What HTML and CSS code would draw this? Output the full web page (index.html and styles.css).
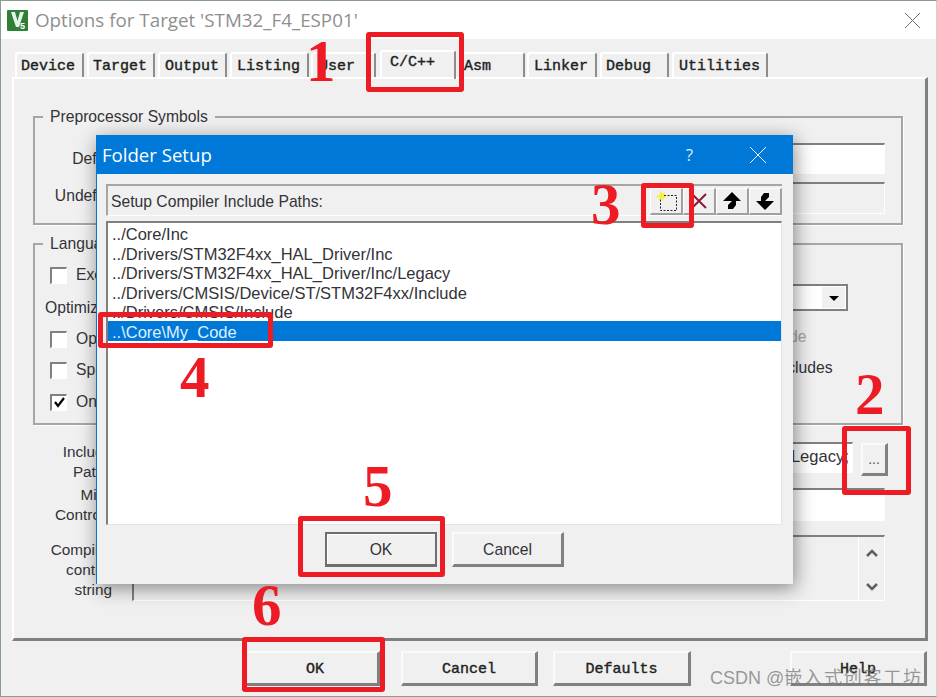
FILE: index.html
```html
<!DOCTYPE html>
<html lang="en">
<head>
    <meta charset="UTF-8">
    <meta name="viewport" content="width=device-width, initial-scale=1.0">
    <title>Options for Target</title>
    <link rel="stylesheet" href="styles.css">
</head>
<body>
    <div class="window">
        <div class="titlebar">
            <svg class="appIcon" width="21" height="21" viewBox="0 0 21 21">
                <rect width="21" height="21" rx="1" fill="#2f7f38"/>
                <path d="M4 2h4l2.500 9 2.500-9h4l-5 15h-3z" fill="#e8f2e8"/>
                <text x="13" y="19" font-family="Liberation Sans" font-size="9" font-weight="bold" fill="#fff">5</text>
            </svg>
            <span class="titleText">Options for Target 'STM32_F4_ESP01'</span>
            <svg class="closeIcon" width="15" height="15" viewBox="0 0 15 15">
                <path d="M0 0L15 15M15 0L0 15" stroke="#707070" fill="none"/>
            </svg>
        </div>

        <div class="tabs">
            <div class="tab tabDevice">Device</div>
            <div class="tab tabTarget">Target</div>
            <div class="tab tabOutput">Output</div>
            <div class="tab tabListing">Listing</div>
            <div class="tab tabUser">User</div>
            <div class="tab tabActive">C/C++</div>
            <div class="tab tabAsm">Asm</div>
            <div class="tab tabLinker">Linker</div>
            <div class="tab tabDebug">Debug</div>
            <div class="tab tabUtilities">Utilities</div>
        </div>

        <div class="panel">
            <fieldset class="group">
                <legend>Preprocessor Symbols</legend>
                <div class="symbolRow">
                    <div class="symbolLabel">Define:</div>
                    <div class="field symbolDefine"></div>
                </div>
                <div class="symbolRow symbolRowLast">
                    <div class="symbolLabel symbolLabelUndefine">Undefine:</div>
                    <div class="field fieldOff symbolUndefine"></div>
                </div>
            </fieldset>

            <fieldset class="group langGroup">
                <legend>Language / Code Generation</legend>
                <div class="langLeft">
                    <div class="check"><span class="checkBox"></span>Execute-only Code</div>
                    <div class="optLabel">Optimization:</div>
                    <div class="check checkOpt"><span class="checkBox"></span>Optimize for Time</div>
                    <div class="check checkSplit"><span class="checkBox"></span>Split Load and Store Multiple</div>
                    <div class="check checkOne">
                        <span class="checkBox">
                            <svg width="13" height="13" viewBox="0 0 13 13"><path d="M2 6l3 4 6-8" stroke="#000" stroke-width="2.200" fill="none"/></svg>
                        </span>One ELF Section per Function
                    </div>
                </div>
                <div class="langRight">
                    <div class="select">
                        <span class="selectArrow"></span>
                    </div>
                    <div class="check checkThumb"><span class="checkBox"></span><span class="disabledText">Thumb Mode</span></div>
                    <div class="check checkAuto"><span class="checkBox"></span>No Auto Includes</div>
                </div>
            </fieldset>

            <div class="formRow includeRow">
                <div class="formLabel">Include<br>Paths</div>
                <div class="field includeField">../Core/Inc;../Drivers/STM32F4xx_HAL_Driver/Inc;../Drivers/STM32F4xx_HAL_Driver/Inc/Legacy;</div>
                <div class="btn browseBtn">...</div>
            </div>
            <div class="formRow miscRow">
                <div class="formLabel">Misc<br>Controls</div>
                <div class="field miscField"></div>
            </div>
            <div class="formRow compilerRow">
                <div class="formLabel compilerLabel">Compiler<br>control<br>string</div>
                <div class="field fieldOff compilerField">
                    <div class="scrollCol">
                        <svg width="14" height="9" viewBox="0 0 14 9"><path d="M2 7l5-5 5 5" stroke="#606060" stroke-width="2.500" fill="none"/></svg>
                        <svg width="14" height="9" viewBox="0 0 14 9"><path d="M2 2l5 5 5-5" stroke="#606060" stroke-width="2.500" fill="none"/></svg>
                    </div>
                </div>
            </div>
        </div>

        <div class="footer">
            <div class="btn footBtn footOk">OK</div>
            <div class="btn footBtn footCancel">Cancel</div>
            <div class="btn footBtn footDefaults">Defaults</div>
            <div class="btn footBtn footHelp">Help</div>
        </div>
    </div>

    <div class="dialog">
        <div class="dialogTitle">
            <span class="dialogName">Folder Setup</span>
            <span class="dialogHelp">?</span>
            <svg class="dialogClose" width="16" height="16" viewBox="0 0 16 16">
                <path d="M0 0L16 16M16 0L0 16" stroke="#fff" fill="none"/>
            </svg>
        </div>
        <div class="pathHeader">
            <span class="pathCaption">Setup Compiler Include Paths:</span>
            <div class="toolBtn">
                <svg width="24" height="22" viewBox="0 0 24 22">
                    <rect x="6.500" y="5.500" width="16" height="15" fill="none" stroke="#222" stroke-dasharray="2 1.500"/>
                    <path d="M7 0l1.500 3.500L12 2 9.500 5.500 13 7.500 9.500 8 10 11 7.500 8.500 4 11l1.500-3.500L1 6.500l4.500-1.500z" fill="#f4f03c"/>
                </svg>
            </div>
            <div class="toolBtn">
                <svg width="16" height="16" viewBox="0 0 16 16"><path d="M1 1L15 15M15 1L1 15" stroke="#8d1c30" stroke-width="2" fill="none"/></svg>
            </div>
            <div class="toolBtn">
                <svg width="18" height="18" viewBox="0 0 18 18"><path d="M9 0L18 9H13V13L10 17H5V13L9 9H0z" fill="#000"/></svg>
            </div>
            <div class="toolBtn">
                <svg width="18" height="18" viewBox="0 0 18 18"><path d="M9 18L0 9H5V5L8 1H13V5L9 9H18z" fill="#000"/></svg>
            </div>
        </div>
        <div class="pathList">
            <div class="pathItem">../Core/Inc</div>
            <div class="pathItem">../Drivers/STM32F4xx_HAL_Driver/Inc</div>
            <div class="pathItem">../Drivers/STM32F4xx_HAL_Driver/Inc/Legacy</div>
            <div class="pathItem">../Drivers/CMSIS/Device/ST/STM32F4xx/Include</div>
            <div class="pathItem">../Drivers/CMSIS/Include</div>
            <div class="pathItem pathSelected">..\Core\My_Code</div>
        </div>
        <div class="dialogButtons">
            <div class="btn dialogBtn dialogOk">OK</div>
            <div class="btn dialogBtn">Cancel</div>
        </div>
    </div>

    <!-- red marks drawn on top of the screenshot -->
    <div class="redBox redBoxTab"></div>
    <div class="redBox redBoxBrowse"></div>
    <div class="redBox redBoxNew"></div>
    <div class="redBox redBoxPath"></div>
    <div class="redBox redBoxDialogOk"></div>
    <div class="redBox redBoxOk"></div>
    <div class="num num1">1</div>
    <div class="num num2">2</div>
    <div class="num num3">3</div>
    <div class="num num4">4</div>
    <div class="num num5">5</div>
    <div class="num num6">6</div>

    <div class="watermark">CSDN @<span class="watermarkCjk">嵌入式创客工坊</span></div>
</body>
</html>
```

FILE: styles.css
```css
body {
    font-family: "Liberation Sans", Arial, sans-serif;
    font-size: 15.700px;
    line-height: 20px;
    margin: 0;
    width: 937px;
    height: 697px;
    overflow: hidden;
    position: relative;
    background-color: #f0f0f0;
    color: #333338;
}

.window {
    box-sizing: border-box;
    width: 937px;
    height: 697px;
    border: 1px solid #8b9c8e;
    border-right-color: #d0d0d0;
    background-color: #f0f0f0;
}

.titlebar {
    display: flex;
    align-items: center;
    height: 38px;
    padding-left: 6px;
    background-color: #fff;
}

.appIcon {
    flex: none;
}

.titleText {
    margin-left: 7px;
    font-family: "Open Sans", sans-serif;
    font-size: 18.800px;
    color: #8f8f8f;
}

.closeIcon {
    margin-left: auto;
    margin-right: 16px;
}

.tabs {
    display: flex;
    align-items: flex-end;
    height: 38px;
    padding-left: 14px;
    font-family: "Liberation Mono", monospace;
    font-size: 15px;
    color: #222;
    -webkit-text-stroke: 0.400px #222;
}

.tab {
    box-sizing: border-box;
    height: 25px;
    padding: 3px 0 0 5px;
    margin-right: 3px;
    border-top: 2px solid #fff;
    border-left: 2px solid #fff;
    border-right: 2px solid #8c8c8c;
    border-radius: 3px 3px 0 0;
}

.tabDevice { width: 69px; padding-left: 4px; }
.tabTarget { width: 68px; padding-left: 4px; }
.tabOutput { width: 69px; }
.tabListing { width: 79px; margin-right: 2px; }
.tabUser { width: 65px; padding-left: 6px; margin-right: 4px; }
.tabActive { width: 76px; height: 29px; margin-bottom: -2px; padding: 1px 0 0 8px; position: relative; }
.tabAsm { width: 66px; padding-left: 3px; margin-right: 2px; }
.tabLinker { width: 70px; }
.tabDebug { width: 69px; padding-left: 4px; }
.tabUtilities { width: 96px; }

.panel {
    box-sizing: border-box;
    width: 916px;
    height: 564px;
    margin-left: 11px;
    padding: 29px 22px 0 19px;
    border-top: 2px solid #fff;
    border-left: 2px solid #fff;
    border-right: 3px solid #808080;
    border-bottom: 3px solid #808080;
}

.group {
    box-sizing: border-box;
    margin: 0;
    padding: 17px 16px 9px 15px;
    min-width: 0;
    border: 2px solid #a6a6a6;
    box-shadow: 1px 1px 0 #fff;
}

.group legend {
    margin-left: -7px;
    padding: 0 7px;
    line-height: 18px;
}

.symbolRow {
    display: flex;
    margin-bottom: 8px;
}

.symbolRowLast {
    margin-bottom: 0;
}

.symbolLabel {
    width: 72px;
    padding-top: 6px;
    text-align: right;
}

.symbolLabelUndefine {
    padding-top: 4px;
}

.field {
    box-sizing: border-box;
    border-top: 2px solid #808080;
    border-left: 2px solid #808080;
    border-right: 1px solid #fff;
    border-bottom: 1px solid #fff;
    background-color: #fff;
}

.fieldOff {
    background-color: #f0f0f0;
}

.symbolDefine,
.symbolUndefine {
    width: 753px;
    margin-left: 10px;
}

.symbolDefine { height: 31px; }
.symbolUndefine { height: 32px; }

.langGroup {
    display: flex;
    margin-top: 10px;
    padding: 12px 0 11px 15px;
}

.langLeft {
    width: 638px;
    flex: none;
}

.langRight {
    width: 160px;
}

.check {
    display: flex;
    align-items: center;
    height: 20px;
    white-space: nowrap;
}

.checkBox {
    box-sizing: border-box;
    display: flex;
    align-items: center;
    justify-content: center;
    width: 17px;
    height: 17px;
    margin-right: 9px;
    border-top: 2px solid #808080;
    border-left: 2px solid #808080;
    border-right: 1px solid #fff;
    border-bottom: 1px solid #fff;
    background-color: #fff;
}

.optLabel {
    height: 20px;
    margin-top: 13px;
    margin-left: -5px;
}

.checkOpt { margin-top: 11px; }
.checkSplit { margin-top: 11px; }
.checkOne { margin-top: 12px; }

.select {
    box-sizing: border-box;
    display: flex;
    justify-content: flex-end;
    height: 27px;
    margin-top: 19px;
    padding: 1px;
    border: 2px solid #808080;
    background-color: #fff;
}

.selectArrow {
    box-sizing: border-box;
    position: relative;
    width: 24px;
    background-color: #f0f0f0;
    border-left: 1px solid #fff;
}

.selectArrow::after {
    content: "";
    position: absolute;
    left: 7px;
    top: 9px;
    border-top: 5px solid #000;
    border-left: 5px solid transparent;
    border-right: 5px solid transparent;
}

.checkThumb { margin-top: 16px; }
.checkAuto { margin-top: 11px; }

.disabledText {
    color: #a5a5a5;
}

.formRow {
    display: flex;
    align-items: flex-start;
}

.formLabel {
    width: 79px;
    margin-right: 20px;
    font-size: 15.300px;
    text-align: right;
    flex: none;
}

.includeRow {
    height: 43px;
    margin-top: 17px;
}

.includeField {
    display: flex;
    justify-content: flex-end;
    width: 721px;
    height: 31px;
    padding-top: 3px;
    padding-right: 3px;
    font-size: 16.600px;
    overflow: hidden;
    white-space: nowrap;
}

.browseBtn {
    display: flex;
    justify-content: center;
    width: 27px;
    height: 33px;
    margin-left: 8px;
    margin-top: 1px;
    color: #5a4a6a;
    font-size: 14px;
    line-height: 28px;
}

.miscRow {
    height: 50px;
}

.miscField {
    width: 753px;
    height: 33px;
    margin-top: 3px;
}

.compilerLabel {
    padding-top: 5px;
}

.compilerField {
    display: flex;
    justify-content: flex-end;
    width: 753px;
    height: 66px;
}

.scrollCol {
    box-sizing: border-box;
    display: flex;
    flex-direction: column;
    align-items: center;
    justify-content: space-between;
    width: 26px;
    padding: 12px 0 9px;
    border-left: 1px solid #fff;
}

.footer {
    display: flex;
    height: 35px;
    margin-top: 10px;
    padding-left: 242px;
    font-family: "Liberation Mono", monospace;
    font-size: 15px;
    color: #222;
    -webkit-text-stroke: 0.400px #222;
}

.btn {
    box-sizing: border-box;
    border-top: 2px solid #fafafa;
    border-left: 2px solid #fafafa;
    border-right: 3px solid #808080;
    border-bottom: 3px solid #808080;
    background-color: #f0f0f0;
}

.footBtn {
    display: flex;
    align-items: center;
    justify-content: center;
    width: 137px;
    height: 35px;
    padding-top: 3px;
}

.footOk { padding-left: 8px; }
.footCancel { margin-left: 21px; }
.footDefaults { margin-left: 15px; width: 138px; }
.footHelp { margin-left: 99px; }

.dialog {
    position: absolute;
    left: 96px;
    top: 135px;
    box-sizing: border-box;
    width: 697px;
    height: 449px;
    border-left: 1px solid #0078d7;
    background-color: #f0f0f0;
    box-shadow: 2px 4px 18px rgba(0, 0, 0, 0.45);
}

.dialogTitle {
    display: flex;
    align-items: center;
    height: 39px;
    padding-left: 5px;
    background-color: #0078d7;
    color: #fff;
}

.dialogName {
    font-family: "Open Sans", sans-serif;
    font-size: 18.600px;
}

.dialogHelp {
    margin-left: auto;
    font-family: "Open Sans", sans-serif;
    font-size: 17px;
    color: #dcebf8;
}

.dialogClose {
    margin-left: 57px;
    margin-right: 27px;
}

.pathHeader {
    box-sizing: border-box;
    display: flex;
    align-items: flex-end;
    width: 676px;
    height: 32px;
    margin: 10px 0 0 9px;
    border-top: 2px solid #a6a6a6;
    border-left: 2px solid #a6a6a6;
    border-bottom: 1px solid #fff;
}

.pathCaption {
    align-self: center;
    margin-left: 3px;
    margin-right: auto;
    padding-top: 3px;
}

.toolBtn {
    box-sizing: border-box;
    display: flex;
    align-items: center;
    justify-content: center;
    width: 33px;
    height: 27px;
    border-top: 1px solid #fff;
    border-left: 1px solid #fff;
    border-right: 2px solid #a0a0a0;
    border-bottom: 2px solid #a0a0a0;
}

.pathList {
    box-sizing: border-box;
    width: 676px;
    height: 304px;
    margin: 5px 0 0 9px;
    border-top: 2px solid #808080;
    border-left: 2px solid #808080;
    border-right: 1px solid #e4e4e4;
    border-bottom: 1px solid #e4e4e4;
    background-color: #fff;
}

.pathItem {
    height: 19.600px;
    line-height: 22px;
    padding-left: 4px;
    font-size: 16.500px;
    white-space: nowrap;
}

.pathSelected {
    background-color: #0078d7;
    color: #dff0ff;
}

.dialogButtons {
    display: flex;
    margin: 7px 0 0 228px;
    gap: 15px;
}

.dialogBtn {
    display: flex;
    align-items: center;
    justify-content: center;
    width: 112px;
    height: 35px;
    padding-top: 1px;
}

.dialogOk {
    border: 2px solid #6e6e6e;
    border-bottom-width: 3px;
    box-shadow: inset 1px 1px 0 #fff;
}

/* red marks */
.redBox {
    position: absolute;
    box-sizing: border-box;
    border: 5px solid #ed1c24;
    border-radius: 3px;
}

.redBoxTab { left: 366px; top: 32px; width: 98px; height: 60px; }
.redBoxBrowse { left: 842px; top: 426px; width: 69px; height: 69px; }
.redBoxNew { left: 641px; top: 183px; width: 53px; height: 45px; }
.redBoxPath { left: 98px; top: 312px; width: 175px; height: 36px; }
.redBoxDialogOk { left: 298px; top: 516px; width: 147px; height: 61px; }
.redBoxOk { left: 242px; top: 637px; width: 143px; height: 55px; }

.num {
    position: absolute;
    font-family: "Liberation Serif", serif;
    font-weight: bold;
    font-size: 59px;
    line-height: 59px;
    color: #ed1c24;
}

.num1 { left: 306px; top: 32px; }
.num2 { left: 855px; top: 365px; }
.num3 { left: 591px; top: 175px; }
.num4 { left: 180px; top: 348px; }
.num5 { left: 363px; top: 457px; }
.num6 { left: 252px; top: 576px; }

.watermark {
    position: absolute;
    left: 710px;
    top: 665px;
    font-family: "Liberation Sans", "Noto Sans CJK SC", sans-serif;
    font-size: 18px;
    line-height: 22px;
    color: rgba(120, 120, 120, 0.75);
    white-space: nowrap;
}

.watermarkCjk {
    font-family: "Noto Sans CJK SC", sans-serif;
    font-size: 18px;
    letter-spacing: 1.800px;
}
```
